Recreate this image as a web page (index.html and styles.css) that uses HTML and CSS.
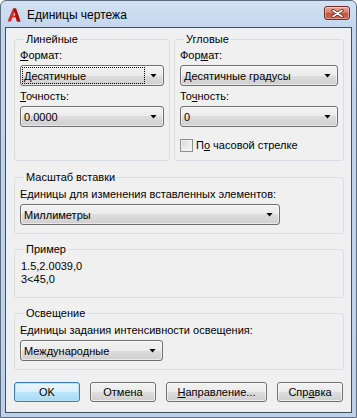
FILE: index.html
```html
<!DOCTYPE html>
<html lang="ru">
<head>
    <meta charset="UTF-8">
    <title>Единицы чертежа</title>
    <link rel="stylesheet" href="styles.css">
</head>
<body>
<div class="window">
    <div class="titlebar">
        <svg class="app-icon" width="14" height="14" viewBox="0 0 14 14">
            <path d="M0.5 13.5 L6 0.5 L9 0.5 L13.5 13.5 L10 13.5 L8.6 9.5 L5.4 9.5 L4 13.5 Z" fill="#d42a24"/>
            <path d="M6 0.5 L9 0.5 L13.5 13.5 L10 13.5 Z" fill="#a3140f"/>
            <path d="M6.2 7.5 L7.4 4 L8.3 7.5 Z" fill="#f3d2cc"/>
        </svg>
        <span class="title">Единицы чертежа</span>
        <div class="close-btn">
            <svg width="13" height="9" viewBox="0 0 13 9">
                <path d="M2 1.5 L11 7.5 M11 1.5 L2 7.5" stroke="#5a1d18" stroke-width="3.2" stroke-linecap="round"/>
                <path d="M2 1.5 L11 7.5 M11 1.5 L2 7.5" stroke="#fff" stroke-width="1.6" stroke-linecap="round"/>
            </svg>
        </div>
    </div>

    <div class="client">
        <div class="top-row">
            <fieldset class="group">
                <legend>Линейные</legend>
                <div class="field-label"><u>Ф</u>ормат:</div>
                <div class="combo">
                    <span class="combo-text focused">Десятичные</span>
                    <span class="combo-arrow"></span>
                </div>
                <div class="field-label next"><u>Т</u>очность:</div>
                <div class="combo">
                    <span class="combo-text">0.0000</span>
                    <span class="combo-arrow"></span>
                </div>
            </fieldset>

            <fieldset class="group">
                <legend>Угловые</legend>
                <div class="field-label">Фор<u>м</u>ат:</div>
                <div class="combo">
                    <span class="combo-text">Десятичные градусы</span>
                    <span class="combo-arrow"></span>
                </div>
                <div class="field-label next">То<u>ч</u>ность:</div>
                <div class="combo">
                    <span class="combo-text">0</span>
                    <span class="combo-arrow"></span>
                </div>
                <label class="check-row">
                    <span class="checkbox"></span>
                    <span>П<u>о</u> часовой стрелке</span>
                </label>
            </fieldset>
        </div>

        <fieldset class="group section">
            <legend>Масштаб вставки</legend>
            <div class="field-label wide">Единицы для изменения вставленных элементов:</div>
            <div class="combo combo-units">
                <span class="combo-text">Миллиметры</span>
                <span class="combo-arrow"></span>
            </div>
        </fieldset>

        <fieldset class="group section">
            <legend>Пример</legend>
            <div class="sample">
                <div>1.5,2.0039,0</div>
                <div>3&lt;45,0</div>
            </div>
        </fieldset>

        <fieldset class="group section">
            <legend>Освещение</legend>
            <div class="field-label wide">Единицы задания интенсивности освещения:</div>
            <div class="combo combo-light">
                <span class="combo-text">Международные</span>
                <span class="combo-arrow"></span>
            </div>
        </fieldset>

        <div class="buttons">
            <button class="btn btn-default">OK</button>
            <button class="btn">Отмена</button>
            <button class="btn btn-wide"><u>Н</u>аправление...</button>
            <button class="btn">Спр<u>а</u>вка</button>
        </div>
    </div>
</div>
</body>
</html>
```

FILE: styles.css
```css
body {
    margin: 0;
    background: #fff;
    font-family: "Liberation Sans", Arial, sans-serif;
    font-size: 11px;
    color: #000;
}
.window {
    width: 357px;
    height: 418px;
    box-sizing: border-box;
    border: 1px solid #5d6d80;
    border-radius: 6px 6px 0 0;
    background: linear-gradient(#d3e2f3, #c1d5ec 30px, #bdd2ea);
    padding: 0 4px 4px;
    display: flex;
    flex-direction: column;
}
.titlebar {
    height: 26px;
    display: flex;
    align-items: flex-start;
}
.app-icon {
    margin: 7px 0 0 2px;
}
.title {
    margin: 7px 0 0 6px;
    font-size: 12px;
    line-height: 15px;
}
.close-btn {
    margin: 5px 2px 0 auto;
    width: 26px;
    height: 14px;
    box-sizing: border-box;
    border: 1px solid #6e3128;
    border-radius: 3px;
    background: linear-gradient(#e9a99c, #d77e6e 45%, #c3533f 55%, #cf6b55);
    box-shadow: inset 0 0 0 1px rgba(255, 255, 255, 0.35);
    display: flex;
    align-items: center;
    justify-content: center;
}
.client {
    flex: 1;
    border: 1px solid #3e4e62;
    background: #f0f0f0;
    padding: 5px 7px 0 8px;
}
.top-row {
    display: grid;
    grid-template-columns: 156px 1fr;
    gap: 4px;
}
.group {
    margin: 0;
    border: 1px solid #d5dfe5;
    border-radius: 3px;
    padding: 0 5px 8px;
    min-width: 0;
}
.section {
    margin-top: 9px;
}
.top-row + .section {
    margin-top: 10px;
}
legend {
    padding: 0 2px;
    margin-left: 4px;
    line-height: 13px;
}
.field-label {
    line-height: 13px;
    margin-top: 3px;
}
.field-label.next {
    margin-top: 4px;
}
.field-label.wide {
    margin-top: 4px;
}
.combo {
    margin-top: 3px;
    height: 21px;
    box-sizing: border-box;
    border: 1px solid #707070;
    border-radius: 3px;
    background: linear-gradient(#f2f2f2, #ebebeb 50%, #dddddd 50%, #cfcfcf);
    box-shadow: inset 0 0 0 1px rgba(255, 255, 255, 0.5);
    padding: 1px;
    display: flex;
}
.combo-text {
    flex: 1;
    display: flex;
    align-items: center;
    padding-left: 2px;
    white-space: nowrap;
}
.combo-text.focused {
    outline: 1px dotted #000;
    outline-offset: -1px;
}
.combo-arrow {
    width: 17px;
    display: flex;
    align-items: center;
    justify-content: center;
}
.combo-arrow::after {
    content: "";
    width: 7px;
    height: 4px;
    background: #000;
    clip-path: polygon(0 0, 100% 0, 50% 100%);
}
.combo-units {
    width: 260px;
}
.combo-light {
    width: 143px;
}
.check-row {
    display: flex;
    align-items: center;
    gap: 3px;
    margin-top: 12px;
    line-height: 13px;
}
.checkbox {
    width: 13px;
    height: 13px;
    box-sizing: border-box;
    border: 1px solid #8e8f8f;
    background: linear-gradient(135deg, #d6d6d6, #fbfbfb);
    box-shadow: inset 0 0 0 1px #f2f2f2;
}
.sample {
    margin-top: 4px;
    line-height: 13px;
    padding-left: 1px;
    padding-bottom: 3px;
}
.buttons {
    display: flex;
    gap: 10px;
    margin-top: 12px;
}
.btn {
    width: 66px;
    height: 20px;
    padding: 0;
    font-family: "Liberation Sans", Arial, sans-serif;
    font-size: 11px;
    color: #000;
    border: 1px solid #707070;
    border-radius: 3px;
    background: linear-gradient(#f2f2f2, #ebebeb 50%, #dddddd 50%, #cfcfcf);
    box-shadow: inset 0 0 0 1px rgba(255, 255, 255, 0.6);
}
.btn-default {
    border-color: #3c7fb1;
    background: linear-gradient(#eaf6fd, #d9f0fc 50%, #bee6fd 50%, #a7d9f5);
    box-shadow: inset 0 0 0 1px #b9e0f7;
}
.btn-wide {
    width: 101px;
}
```
